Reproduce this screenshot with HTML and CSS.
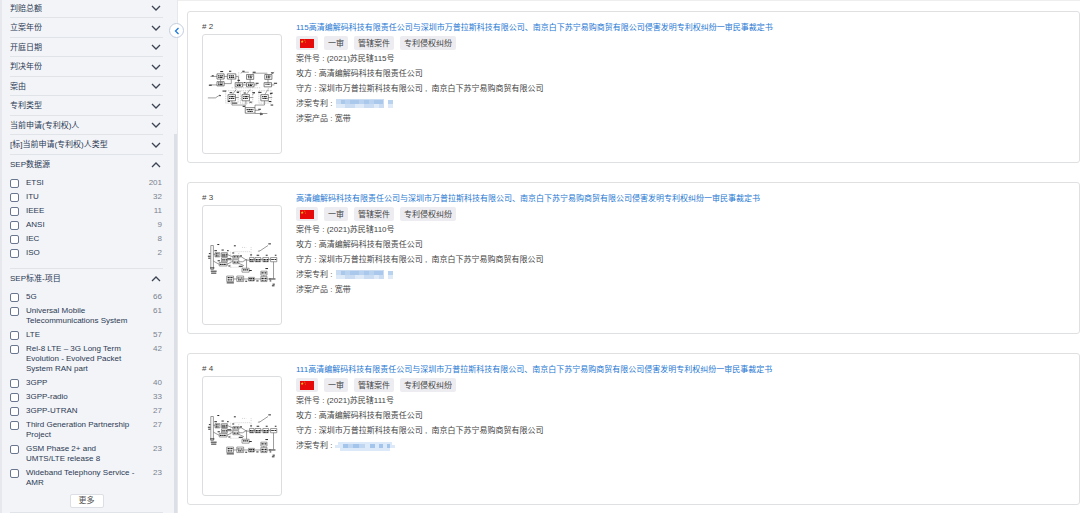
FILE: index.html
```html
<!DOCTYPE HTML>
<html lang="zh-CN">
<head>
<meta charset="utf-8">
<meta name="viewport" content="width=device-width, initial-scale=1.0"/>
<title>专利诉讼案件列表</title>
<link rel="stylesheet" href="styles.css">
</head>
<body>
<!-- 公用图形 -->
<svg class="defs" aria-hidden="true">
	<symbol id="down" viewBox="0 0 10 6"><path d="M1 1l4 4 4-4" fill="none" stroke="currentColor" stroke-width="1.3"/></symbol>
	<symbol id="up" viewBox="0 0 10 6"><path d="M1 5l4-4 4 4" fill="none" stroke="currentColor" stroke-width="1.3"/></symbol>
	<symbol id="flag" viewBox="0 0 14 9">
		<path fill="#e60a0a" d="M0 0h14v9H0z"/>
		<path fill="#f9c51c" d="M2.2 1l.4 1.1h1.1l-.9.7.3 1.1-.9-.7-.9.7.3-1.1-.9-.7h1.1zM4.4.8h.6v.6h-.6zM5.2 1.7h.6v.6h-.6zM5.2 3h.6v.6h-.6z"/>
	</symbol>
	<symbol id="mosaic" viewBox="0 0 58 10">
		<path fill="#c9dcf2" d="M0 0h48v9H0z"/>
		<path fill="#a9c8ec" d="M5 1h4v4H5zM14 1h9v4h-9zM28 1h5v4h-5zM38 1h9v4h-9z"/>
		<path fill="#b9d2ef" d="M9 1h5v4H9zM23 1h5v4h-5zM33 1h5v4h-5zM52 1h5v4h-5z"/>
		<path fill="#deeaf8" d="M0 5h9v4H0zM19 5h9v4h-9zM38 5h5v4h-5zM52 5h5v4h-5z"/>
	</symbol>
	<symbol id="mosaic-wide" viewBox="0 0 60 10">
		<path fill="#dce9f8" d="M3 1h54v3h3v3h-5v3H5V7H0V4h3z"/>
		<path fill="#a3c5ec" d="M8 3h5v4H8zM18 3h6v4h-6zM35 3h5v4h-5zM44 3h4v4h-4zM52 3h3v4h-3z"/>
		<path fill="#bed6f1" d="M13 3h5v4h-5zM24 3h6v4h-6z"/>
	</symbol>
	<!-- 专利附图：编码系统框图 -->
	<symbol id="fig-a" viewBox="18 -48 240 360">
		<g fill="none" stroke="#444" stroke-width="2">
			<path d="M61 70h22v16H61zM93 70h26v16H93zM152 72h22v15h-22zM208 72h22v15h-22zM61 94h22v13H61zM117 97h23v13h-23zM152 97h23v13h-23zM206 97h23v13h-23z"/>
			<path d="M95 134h23v19H95zM138 134h23v19h-23zM196 134h23v19h-23zM148 174h30v17h-30z"/>
			<path d="M41 78h20M83 78h10M38 104h23M72 86v8M83 100h22V86M119 78h8v19M163 87v10M218 87v10M140 104h12M175 104h10M229 104h9" stroke-width="1.6"/>
			<path d="M33 144h23l14-9M118 143h10M161 143h12M219 143h12M107 153v13h41v8M150 153v12M207 153v13h-29v8M178 182h14M178 192h38M196 188v10" stroke-width="1.6"/>
			<path d="M120 118l-12 16M163 118l-12 16M218 118l-10 16M134 68l5-3h20M170 68h46M230 70l7-5M121 126l10-3M170 134l8-6M224 134l8-6" stroke-width="1.5"/>
		</g>
		<g fill="none" stroke="#888" stroke-width="1.3" stroke-dasharray="4 3">
			<path d="M106 113h91M128 65v30M88 122h38v38H88zM133 122h38v38h-38zM190 122h38v38h-38zM118 113v10M219 113v10"/>
		</g>
		<path d="M64 76h16M65 81h14M97 76h18M98 81h16M156 77h14M157 82h12M212 77h14M212 82h13M64 98h15M65 103h14M121 102h15M122 106h13M156 102h15M157 106h13M210 102h15M99 140h16M98 146h18M142 140h16M141 146h15M200 140h15M201 146h15M152 180h21M155 186h16" stroke="#222" stroke-width="3.4" stroke-dasharray="4 1.5 6 1"/>
		<path d="M71 63h9M98 62h7M139 62h7M171 65h9M227 67h8M45 76h6M36 105h9M124 90h8M143 97h6M180 99h9M236 99h10M78 123h11M100 128h8M122 127h7M170 128h8M143 129h7M188 127h10M224 130h8M68 137h5M94 155h7M108 160h15M161 157h7M220 155h8M226 166h8M140 170h7M188 179h8M193 194h9" stroke="#222" stroke-width="3"/>
	</symbol>
	<!-- 专利附图：解码系统框图 -->
	<symbol id="fig-b" viewBox="18 45 240 360">
		<g fill="none" stroke="#555" stroke-width="1.8">
			<path d="M42 165h8v74h-8zM55 187h15v13H55zM75 187h18v13H75zM75 203h18v12H75zM68 217h24v11H68zM110 196h18v10h-18zM110 209h18v12h-18zM138 235h22v12h-22z"/>
			<path d="M161 202h14v13h-14zM178 202h18v13h-18zM202 202h18v13h-18zM226 202h19v13h-19zM91 259h21v17H91zM122 259h21v17h-21zM158 263h18v11h-18zM196 244h19v12h-19zM196 260h19v16h-19z"/>
			<path d="M50 192h5M50 213l18 10M93 193l17 7M93 209h17M92 223l18-10M128 200h8l16 10h9M128 215h12l14-8M175 208h3M196 208h6M220 208h6M144 227l-16-7M152 210v25M112 268h10M143 268h15M176 268h20M205 256v4M235 215v51M215 268h14M191 183l27-18M187 183l5-2"/>
		</g>
		<path d="M103 184v50M112 184h54v15M166 170v10M138 171h13M103 232h40M128 188v17" fill="none" stroke="#999" stroke-width="1.3" stroke-dasharray="3 3"/>
		<path d="M57 191h11M57 197h10M77 192h15M77 197h14M77 209h15M70 223h20M112 200h14M112 216h14M141 240h17M162 208h12M163 213h11M180 208h15M180 213h14M204 208h15M204 213h14M228 208h16M94 264h15M94 271h14M124 265h17M126 271h14M160 267h15M161 272h14M198 249h15M198 266h16M198 272h15" stroke="#222" stroke-width="3.6" stroke-dasharray="5 1 3 1.5"/>
		<path d="M62 162h6M113 166h6M219 160h8M75 179h7M92 181h5M53 181h8M108 188h6M131 197h7M163 194h6M183 195h8M211 195h6M239 195h5M33 198h8M34 204h7M36 190h5M40 234h13M42 244h18M43 250h16M63 212h7M94 206h11M96 228h6M128 229h12M160 242h8M91 280h22M148 275h6M182 274h7M210 236h8M221 268h8M229 268h12M232 284h7M230 289h8M223 274h5" stroke="#222" stroke-width="3"/>
	</symbol>
</svg>
<div class="page">
	<aside class="side">
		<ul class="folds">
			<li><button type="button">判赔总额<svg><use href="#down"/></svg></button></li>
			<li><button type="button">立案年份<svg><use href="#down"/></svg></button></li>
			<li><button type="button">开庭日期<svg><use href="#down"/></svg></button></li>
			<li><button type="button">判决年份<svg><use href="#down"/></svg></button></li>
			<li><button type="button">案由<svg><use href="#down"/></svg></button></li>
			<li><button type="button">专利类型<svg><use href="#down"/></svg></button></li>
			<li><button type="button">当前申请(专利权)人<svg><use href="#down"/></svg></button></li>
			<li><button type="button">[标]当前申请(专利权)人类型<svg><use href="#down"/></svg></button></li>
		</ul>
		<section class="group">
			<button type="button">SEP数据源<svg><use href="#up"/></svg></button>
			<ul class="opts">
				<li><label><input type="checkbox"><span>ETSI</span><em>201</em></label></li>
				<li><label><input type="checkbox"><span>ITU</span><em>32</em></label></li>
				<li><label><input type="checkbox"><span>IEEE</span><em>11</em></label></li>
				<li><label><input type="checkbox"><span>ANSI</span><em>9</em></label></li>
				<li><label><input type="checkbox"><span>IEC</span><em>8</em></label></li>
				<li><label><input type="checkbox"><span>ISO</span><em>2</em></label></li>
			</ul>
		</section>
		<section class="group">
			<button type="button">SEP标准-项目<svg><use href="#up"/></svg></button>
			<ul class="opts">
				<li><label><input type="checkbox"><span>5G</span><em>66</em></label></li>
				<li><label><input type="checkbox"><span>Universal Mobile<br>Telecommunications System</span><em>61</em></label></li>
				<li><label><input type="checkbox"><span>LTE</span><em>57</em></label></li>
				<li><label><input type="checkbox"><span>Rel-8 LTE – 3G Long Term<br>Evolution - Evolved Packet<br>System RAN part</span><em>42</em></label></li>
				<li><label><input type="checkbox"><span>3GPP</span><em>40</em></label></li>
				<li><label><input type="checkbox"><span>3GPP-radio</span><em>33</em></label></li>
				<li><label><input type="checkbox"><span>3GPP-UTRAN</span><em>27</em></label></li>
				<li><label><input type="checkbox"><span>Third Generation Partnership<br>Project</span><em>27</em></label></li>
				<li><label><input type="checkbox"><span>GSM Phase 2+ and<br>UMTS/LTE release 8</span><em>23</em></label></li>
				<li><label><input type="checkbox"><span>Wideband Telephony Service -<br>AMR</span><em>23</em></label></li>
			</ul>
			<button type="button" class="more">更多</button>
		</section>
		<i class="bar"></i>
		<button type="button" class="toggle" aria-label="收起"><svg viewBox="0 0 6 8"><path d="M4.5 1L1.5 4l3 3" fill="none" stroke="#1f7ae0" stroke-width="1.3"/></svg></button>
	</aside>
	<main class="list">
		<article class="card">
			<div class="pic"><p># 2</p><svg><use href="#fig-a"/></svg></div>
			<div class="info">
				<h3><a href="#">115高清编解码科技有限责任公司与深圳市万普拉斯科技有限公司、南京白下苏宁易购商贸有限公司侵害发明专利权纠纷一审民事裁定书</a></h3>
				<div class="tags"><span><svg><use href="#flag"/></svg></span><span>一审</span><span>管辖案件</span><span>专利侵权纠纷</span></div>
				<p>案件号 : (2021)苏民辖115号</p>
				<p>攻方 : 高清编解码科技有限责任公司</p>
				<p>守方 : 深圳市万普拉斯科技有限公司 ,&nbsp; 南京白下苏宁易购商贸有限公司</p>
				<p>涉案专利 : <svg class="mask"><use href="#mosaic"/></svg></p>
				<p>涉案产品 : 宽带</p>
			</div>
		</article>
		<article class="card">
			<div class="pic"><p># 3</p><svg><use href="#fig-b"/></svg></div>
			<div class="info">
				<h3><a href="#">高清编解码科技有限责任公司与深圳市万普拉斯科技有限公司、南京白下苏宁易购商贸有限公司侵害发明专利权纠纷一审民事裁定书</a></h3>
				<div class="tags"><span><svg><use href="#flag"/></svg></span><span>一审</span><span>管辖案件</span><span>专利侵权纠纷</span></div>
				<p>案件号 : (2021)苏民辖110号</p>
				<p>攻方 : 高清编解码科技有限责任公司</p>
				<p>守方 : 深圳市万普拉斯科技有限公司 ,&nbsp; 南京白下苏宁易购商贸有限公司</p>
				<p>涉案专利 : <svg class="mask"><use href="#mosaic"/></svg></p>
				<p>涉案产品 : 宽带</p>
			</div>
		</article>
		<article class="card">
			<div class="pic"><p># 4</p><svg><use href="#fig-b"/></svg></div>
			<div class="info">
				<h3><a href="#">111高清编解码科技有限责任公司与深圳市万普拉斯科技有限公司、南京白下苏宁易购商贸有限公司侵害发明专利权纠纷一审民事裁定书</a></h3>
				<div class="tags"><span><svg><use href="#flag"/></svg></span><span>一审</span><span>管辖案件</span><span>专利侵权纠纷</span></div>
				<p>案件号 : (2021)苏民辖111号</p>
				<p>攻方 : 高清编解码科技有限责任公司</p>
				<p>守方 : 深圳市万普拉斯科技有限公司 ,&nbsp; 南京白下苏宁易购商贸有限公司</p>
				<p>涉案专利 : <svg class="mask"><use href="#mosaic-wide"/></svg></p>
			</div>
		</article>
	</main>
</div>
</body>
</html>
```
FILE: styles.css
```css
*{box-sizing: border-box;}
body,ul,li,p,h3{margin: 0;padding: 0;}
body{font: 8px/15px "Liberation Sans","Noto Sans CJK SC",sans-serif;color: #444;background: #fff;overflow-x: hidden;}
ul{list-style: none;}
em{font-style: normal;}
button{margin: 0;padding: 0;border: 0;background: none;font: inherit;color: inherit;cursor: pointer;}
.defs{position: absolute;width: 0;height: 0;}
.page{display: flex;min-height: 100vh;align-items: stretch;}

/* 左侧筛选 */
.side{position: relative;flex: none;width: 178px;padding: 0 14px 0 8px;background: #f3f4f7;border-left: 2px solid #e6e8ed;border-right: 1px solid #e6e8ed;color: #2b3a55;}
.folds li{height: 19px;border-bottom: 1px solid #e0e3e8;}
.folds li:nth-child(even){height: 20px;}
.folds li:first-child{height: 18px;}
.folds button,.group>button:first-child{display: flex;width: 100%;height: 100%;align-items: center;justify-content: space-between;padding-right: 2px;text-align: left;}
.folds svg,.group>button svg{width: 10px;height: 6px;color: #3c4454;}
.folds li:first-child button{height: 16px;}
.group{border-bottom: 1px solid #e0e3e8;padding-bottom: 6px;}
.group>button:first-child{height: 19px;}
.opts{padding: 4px 1px 0 0;}
.opts label{display: flex;margin-bottom: 4px;line-height: 10px;}
.opts input{appearance: none;flex: none;width: 9px;height: 9px;margin: 1px 7px 0 0;border: 1px solid #6a7690;border-radius: 2px;background: #fff;}
.opts input:checked{background: #1f7ae0;}
.opts span{flex: 1;white-space: nowrap;}
.opts em{color: #7a8290;}
.group .more{display: block;width: 34px;height: 14px;margin: 6px auto 0;border: 1px solid #dcdfe5;border-radius: 2px;background: #fff;line-height: 12px;color: #555;}
.group:nth-of-type(2){padding-bottom: 4px;}
.bar{position: absolute;right: 0;top: 134px;bottom: 0;width: 3px;background: #dcdfe5;}
.toggle{position: absolute;right: -7px;top: 23px;display: flex;width: 15px;height: 15px;align-items: center;justify-content: center;border: 1px solid #c3cddd;border-radius: 50%;background: #fff;}
.toggle svg{width: 6px;height: 8px;}

/* 右侧案件列表 */
.list{flex: 1;min-width: 0;padding: 10px 0 0 9px;border-top: 1px solid #eee;}
.card{display: flex;padding: 8px 14px;margin-bottom: 19px;border: 1px solid #dfe0e2;border-radius: 3px;}
.card:last-child{margin-bottom: 0;}
.pic{flex: none;width: 80px;margin-right: 14px;}
.pic p{line-height: 14px;}
.pic svg{display: block;width: 80px;height: 120px;border: 1px solid #dcdddf;border-radius: 3px;}
.info{flex: 1;min-width: 0;}
h3{font-size: 8px;font-weight: normal;}
h3 a{color: #2677d2;text-decoration: none;}
h3 a:hover{text-decoration: underline;}
.tags{display: flex;gap: 6px;height: 16px;align-items: center;}
.tags span{display: flex;height: 14px;padding: 0 4px;align-items: center;border-radius: 2px;background: #ededf1;}
.tags svg{width: 14px;height: 9px;}
.mask{width: 60px;height: 10px;vertical-align: middle;}
```
